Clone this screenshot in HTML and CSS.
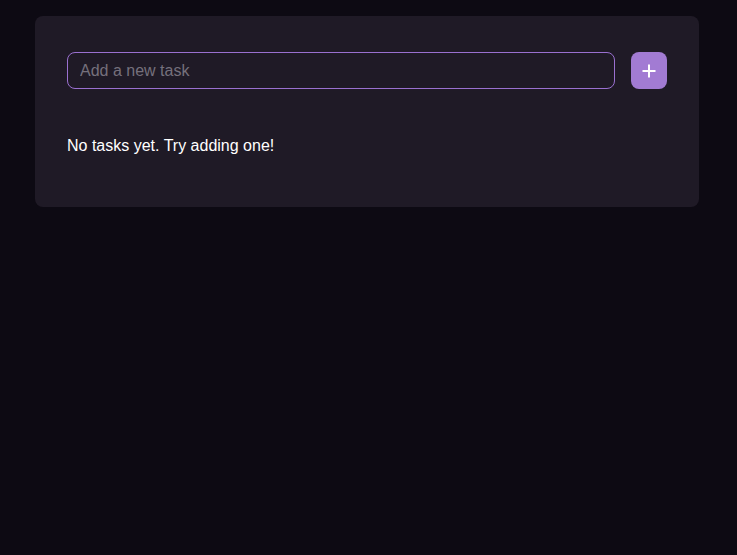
FILE: index.html
```html
<!DOCTYPE html>
<html lang="en">
<head>
<meta charset="utf-8">
<title>Tasks</title>
<link rel="stylesheet" href="styles.css">
</head>
<body>
<main class="card">
  <form class="add-row">
    <input class="task-input" type="text" placeholder="Add a new task">
    <button class="add-btn" type="button" aria-label="Add task">
      <svg width="16" height="16" viewBox="0 0 16 16"><path d="M8 1.5v13M1.5 8h13" stroke="#fff" stroke-width="2" fill="none"/></svg>
    </button>
  </form>
  <p class="empty">No tasks yet. Try adding one!</p>
</main>
</body>
</html>
```
FILE: styles.css
```css
html, body {
  margin: 0;
  padding: 0;
  background: #0d0a13;
  font-family: "Liberation Sans", Arial, sans-serif;
  color: #ffffff;
}
body {
  padding: 16px 38px 0 35px;
}
.card {
  background: #1f1a26;
  border-radius: 8px;
  padding: 36px 32px 32px;
  box-sizing: border-box;
  height: 191px;
}
.add-row {
  display: flex;
  gap: 16px;
  margin: 0;
}
.task-input {
  flex: 1;
  height: 37px;
  box-sizing: border-box;
  background: transparent;
  border: 1px solid #9a70d0;
  border-radius: 8px;
  padding: 0 12px;
  font-family: inherit;
  font-size: 16px;
  color: #fff;
  outline: none;
}
.task-input::placeholder {
  color: #75707c;
}
.add-btn {
  width: 36px;
  height: 37px;
  border: none;
  border-radius: 8px;
  background: #a27bd3;
  display: flex;
  align-items: center;
  justify-content: center;
  padding: 0;
  cursor: pointer;
}
.empty {
  margin: 48px 0 0;
  font-size: 16px;
  line-height: 18px;
  color: #ffffff;
}
```
